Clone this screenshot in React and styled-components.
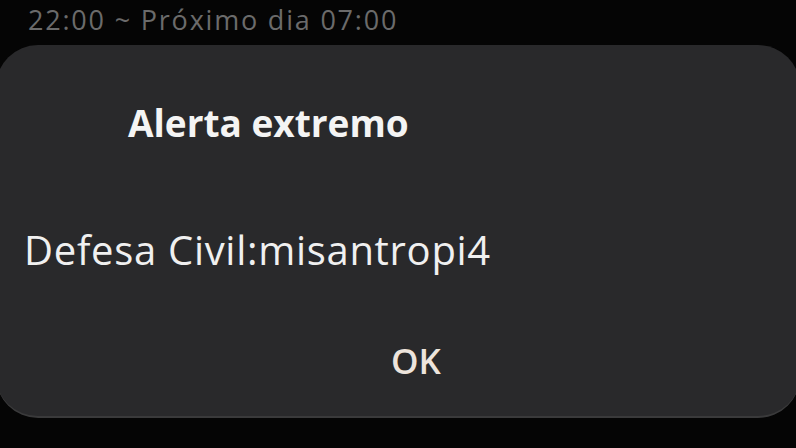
import React from "react";
import styled, { createGlobalStyle } from "styled-components";

const GlobalStyle = createGlobalStyle`
  html, body {
    margin: 0;
    padding: 0;
    background: #050505;
    overflow: hidden;
  }
  body {
    font-family: "Open Sans", "Noto Sans", sans-serif;
    -webkit-font-smoothing: antialiased;
  }
`;

const Screen = styled.div`
  width: 796px;
  height: 448px;
  display: flex;
  flex-direction: column;
  background: #050505;
  overflow: hidden;
`;

const Schedule = styled.div`
  height: 45px;
  padding-left: 28px;
  color: #6b6b6b;
  font-size: 27px;
  letter-spacing: 1.8px;
  line-height: 40px;
  white-space: nowrap;
`;

const Dialog = styled.div`
  margin: 0 -4px;
  height: 373px;
  background: #29292b;
  border-radius: 42px;
  border-bottom: 2px solid #3a3a3b;
  box-sizing: border-box;
  display: flex;
  flex-direction: column;
  padding: 0 28px;
`;

const Title = styled.h2`
  margin: 53px 0 0 104px;
  font-size: 37px;
  font-weight: 700;
  color: #f4f4f4;
  line-height: 50px;
`;

const Message = styled.p`
  margin: 77px 0 0 0;
  font-size: 40px;
  font-weight: 400;
  letter-spacing: 0.7px;
  color: #f0f0f0;
  line-height: 50px;
  white-space: nowrap;
`;

const Actions = styled.div`
  display: flex;
  justify-content: center;
  margin-top: 61px;
`;

const Button = styled.button`
  background: none;
  border: none;
  padding: 0;
  font-family: inherit;
  font-size: 35px;
  font-weight: 600;
  color: #ede4dc;
  line-height: 50px;
  margin-left: 36px;
`;

export default function App() {
  return (
    <Screen>
      <GlobalStyle />
      <Schedule>22:00 ~ Próximo dia 07:00</Schedule>
      <Dialog>
        <Title>Alerta extremo</Title>
        <Message>Defesa Civil:misantropi4</Message>
        <Actions>
          <Button>OK</Button>
        </Actions>
      </Dialog>
    </Screen>
  );
}
